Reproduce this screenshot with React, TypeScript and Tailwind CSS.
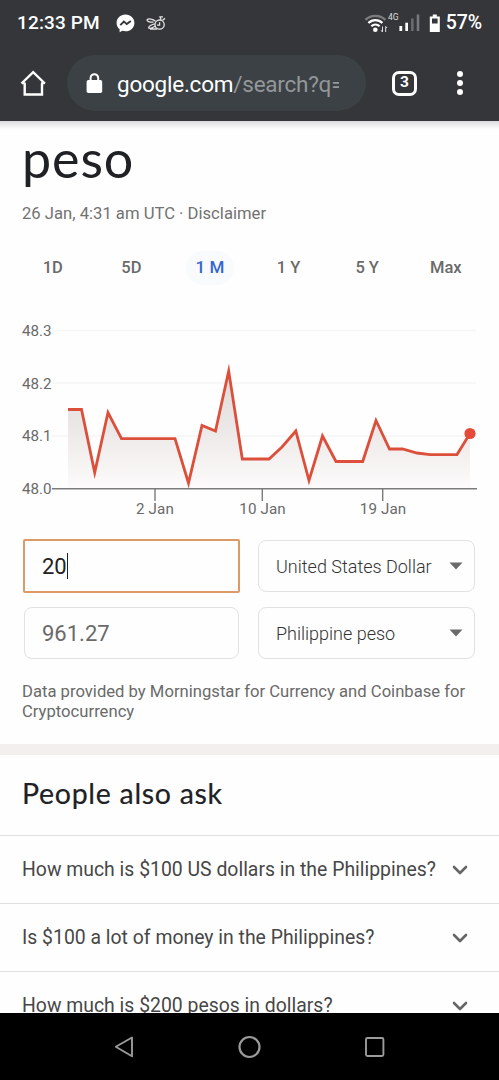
import { ChevronDown } from "lucide-react";

const ranges = ["1D", "5D", "1 M", "1 Y", "5 Y", "Max"];

const questions = [
  "How much is $100 US dollars in the Philippines?",
  "Is $100 a lot of money in the Philippines?",
  "How much is $200 pesos in dollars?",
];

const line =
  "68,409.5 81.5,409.5 94.7,472.5 108,412.5 121.5,438.7 175,438.7 188.5,483 202,425.5 215.5,431 228.7,371 242.3,459 269,459 282,447 295.8,431 309,480.5 322.5,436 336,461.5 362.7,461.5 376,420.5 389.5,449 402.5,449 417,453 430,454.6 457,454.6 470,433.5";

function StatusBar() {
  return (
    <div className="flex h-[45px] items-center pl-[17px] pr-[17px] pt-px text-[19px] font-medium text-white">
      <span className="w-[84px] whitespace-nowrap tracking-[0.15px]">12:33 PM</span>
      <svg className="ml-[15px] shrink-0" width="19" height="19" viewBox="0 0 19 19">
        <path
          d="M9.5.5C4.3.5.6 4.2.6 9c0 2.6 1.1 4.8 3 6.3v3l2.8-1.5c1 .3 2 .4 3.1.4 5.1 0 8.9-3.6 8.9-8.3S14.6.5 9.5.5Z"
          fill="#fff"
        />
        <path d="m4.3 11.2 3.6-3.6 2.9 2.5 4-3" fill="none" stroke="#35363a" strokeWidth="1.9" />
      </svg>
      <svg
        className="ml-[11px] shrink-0"
        width="20"
        height="18"
        viewBox="0 0 20 18"
        fill="none"
        stroke="#e4e4e4"
        strokeWidth="1.3"
      >
        <circle cx="13.6" cy="10.6" r="4.6" />
        <path d="M13.6 8.200v3h-2.600M9.500 7.200C7 4.800 2.200 4.300 1.200 5.700c-.6 1.500 2.300 2.700 6.300 2.500M8.800 9.800C5.500 10.300 2.500 12.500 2.600 13.800c.4 1.200 4.200.2 6.500-1.800M4 15h7M15 5.800l-1-3h3M16.500 6.200l2.500-1.800" />
      </svg>
      <svg className="ml-auto shrink-0" width="76" height="24" viewBox="364 10 76 24">
        <g fill="none">
          <path d="M365.4 18.8a14.5 14.5 0 0 1 20 0" stroke="#7d7d80" strokeWidth="2.3" />
          <path d="M368.4 22a10 10 0 0 1 14 0" stroke="#fff" strokeWidth="2.3" />
          <path d="M371.3 25.3a6.2 6.2 0 0 1 8.3 0" stroke="#fff" strokeWidth="2.2" />
          <path d="M382.5 31v-5.5m-1.5 3.7 1.5 1.8M385.7 25.5V31m1.4-4-1.4-1.5" stroke="#ddd" />
        </g>
        <circle cx="375.3" cy="28.7" r="2.3" fill="#fff" />
        <text x="388" y="18.5" fill="#ddd" fontSize="8.6" fontWeight="400">
          4G
        </text>
        <path d="M399.4 25h2.8v5h-2.8z" fill="#fff" />
        <path d="M405.3 21.7h2.7V30h-2.7z" fill="#fff" />
        <path d="M411 17.5h2.7V30H411z" fill="#68696c" />
        <path d="M416.7 13.5h2.6V30h-2.6z" fill="#77787b" />
        <path d="M432.8 13.5h4v2h3V31h-10V15.5h3z" fill="#fff" />
        <path d="M432 17.5h5.6v5H432z" fill="#35363a" />
      </svg>
      <span className="ml-[6px] whitespace-nowrap text-[19.5px] tracking-[-0.1px]">57%</span>
    </div>
  );
}

function AddressBar() {
  return (
    <div className="flex h-[76px] items-center">
      <svg className="ml-5 shrink-0" width="26" height="28" viewBox="20 69 26 28" fill="none">
        <path d="M24.7 83.2V94.5H42V83.2M21.5 83.5 33.2 72.2 44.9 83.5" stroke="#fff" strokeWidth="2.4" />
        <path d="M22 83.2h3.5M41 83.2h3.5" stroke="#fff" strokeWidth="2" />
      </svg>
      <div className="ml-[21px] flex h-14 w-[299px] shrink-0 items-center rounded-full bg-[#3b4144] pl-[19px]">
        <svg width="17" height="21" viewBox="0 0 17 21">
          <rect x="0.6" y="7" width="15.6" height="13" rx="1.8" fill="#fff" />
          <path d="M4.6 8V5a3.8 3.8 0 0 1 7.6 0v3" fill="none" stroke="#fff" strokeWidth="2" />
        </svg>
        <div className="ml-[14px] mt-0.5 w-[222px] overflow-hidden whitespace-nowrap text-[22.5px] leading-8 tracking-[-0.24px] text-white">
          google.com<span className="text-[#94979a]">/search?q=</span>
        </div>
      </div>
      <div className="ml-[26px] flex size-[25px] shrink-0 items-center justify-center rounded-[7px] border-[3px] border-white text-[15.5px] font-bold leading-none text-white">
        3
      </div>
      <div className="ml-[40px] flex flex-col gap-[3px]">
        <i className="size-[6px] rounded-full bg-white" />
        <i className="size-[6px] rounded-full bg-white" />
        <i className="size-[6px] rounded-full bg-white" />
      </div>
    </div>
  );
}

function RateChart() {
  return (
    <svg className="block h-[210px] w-full" viewBox="0 315 499 210">
      <defs>
        <linearGradient id="area" x1="0" y1="368" x2="0" y2="489" gradientUnits="userSpaceOnUse">
          <stop offset="0" stopColor="#dedad8" />
          <stop offset="0.5" stopColor="#ece8e7" />
          <stop offset="1" stopColor="#fdfbfb" />
        </linearGradient>
      </defs>
      <path d="M52 330.5H476M52 383H476M52 436H476" stroke="#f5f5f5" strokeWidth="1.5" />
      <polygon points={`68,488 ${line} 470,488`} fill="url(#area)" />
      <path d="M52 488.7H477M155 489V501M262.3 489V501M382.7 489V501" fill="none" stroke="#7b7b7b" strokeWidth="1.4" />
      <polyline points={line} fill="none" stroke="#dc4f3a" strokeWidth="2.8" strokeMiterlimit="8" />
      <circle cx="470" cy="433.5" r="5.6" fill="#e64a38" />
      <g fill="#6a6a6a" fontSize="15.2">
        <text x="22" y="336">48.3</text>
        <text x="22" y="388.5">48.2</text>
        <text x="22" y="441.3">48.1</text>
        <text x="22" y="494">48.0</text>
        <g textAnchor="middle" letterSpacing="0.1">
          <text x="155" y="514">2 Jan</text>
          <text x="262.5" y="514">10 Jan</text>
          <text x="383" y="514">19 Jan</text>
        </g>
      </g>
    </svg>
  );
}

function CurrencySelect({ name }: { name: string }) {
  return (
    <div className="flex h-[52px] w-[217px] items-center justify-between rounded-lg border-[1.5px] border-[#e2e2e2] pl-[17px] pr-[11px] text-[18px] font-light text-[#333]">
      <span className="whitespace-nowrap">{name}</span>
      <svg width="14" height="8" viewBox="0 0 14 8">
        <path d="M0.5 0.5h13L7 7.5z" fill="#6b6b6b" />
      </svg>
    </div>
  );
}

function Converter() {
  return (
    <div className="flex flex-col gap-[14px] pl-[23px] pt-[14px]">
      <div className="flex items-center gap-[18px]">
        <div className="flex h-[54px] w-[217px] items-center rounded-[2px] border-2 border-[#dc9a66] pl-[17px] text-[22px] text-[#222]">
          20
          <i className="h-[26px] w-[1.5px] bg-[#222]" />
        </div>
        <CurrencySelect name="United States Dollar" />
      </div>
      <div className="flex gap-[19px]">
        <div className="ml-px flex h-[52px] w-[215px] items-center rounded-lg border-[1.5px] border-[#e2e2e2] pl-[17px] text-[22px] text-[#6a6a6a]">
          961.27
        </div>
        <CurrencySelect name="Philippine peso" />
      </div>
    </div>
  );
}

function SystemNav() {
  return (
    <div className="h-[67px] shrink-0 bg-black">
      <svg className="block" width="499" height="67" viewBox="0 1013 499 67" fill="none" stroke="#9b9b9b">
        <path d="M132 1037.5V1056.2L115.8 1046.8Z" strokeWidth="1.9" strokeLinejoin="round" />
        <circle cx="249.5" cy="1047" r="10" strokeWidth="2.2" />
        <rect x="366" y="1038" width="17.4" height="18" rx="1.5" strokeWidth="1.9" />
      </svg>
    </div>
  );
}

function App() {
  return (
    <div className="flex h-[1080px] w-[499px] flex-col overflow-hidden bg-[#fefefe] font-[Roboto,sans-serif]">
      <header className="h-[121px] shrink-0 bg-[#35363a]">
        <StatusBar />
        <AddressBar />
      </header>
      <main className="min-h-0 flex-1 overflow-hidden">
        <div className="h-2 bg-linear-to-b from-[#dddbdb] to-[#fefefe]" />
        <h1 className="-mt-px pl-[22px] font-[Lato,sans-serif] text-[52px] leading-[60px] tracking-[0.9px] text-[#202124]">
          peso
        </h1>
        <p className="pl-[22px] pt-[16px] text-[16.65px] leading-5 text-[#727272]">26 Jan, 4:31 am UTC · Disclaimer</p>
        <div className="ml-[13.5px] flex pt-[27px]">
          {ranges.map((range) => (
            <div key={range} className="flex w-[78.6px] justify-center">
              <span
                className={
                  range === "1 M"
                    ? "flex h-[34px] w-12 items-center justify-center whitespace-nowrap rounded-full bg-[#f9fafc] text-[17px] font-medium text-[#3367cf]"
                    : "flex h-[34px] items-center whitespace-nowrap text-[16.5px] font-medium text-[#6a6a6a]"
                }
              >
                {range}
              </span>
            </div>
          ))}
        </div>
        <div className="pt-[30px]">
          <RateChart />
        </div>
        <Converter />
        <p className="pl-[22px] pt-[23px] text-[16.65px] leading-5 text-[#6a6a6a]">
          Data provided by Morningstar for Currency and Coinbase for
          <br />
          Cryptocurrency
        </p>
        <div className="mt-[22px] h-[11px] bg-[#f3efef]" />
        <h2 className="flex h-[81px] items-center border-b-[1.5px] border-[#e2e0e0] pb-[3px] pl-[22px] font-[Lato,sans-serif] text-[28.5px] tracking-[0.7px] text-[#202124] [-webkit-text-stroke:0.2px]">
          People also ask
        </h2>
        {questions.map((question) => (
          <div
            key={question}
            className="flex h-[68px] items-center justify-between border-b border-[#e2dfdf] pl-[22px] pr-[27px]"
          >
            <span className="whitespace-nowrap text-[19.4px] text-[#474747]">{question}</span>
            <ChevronDown className="text-[#666]" size={24} strokeWidth={2.6} />
          </div>
        ))}
      </main>
      <SystemNav />
    </div>
  );
}

export default App;
